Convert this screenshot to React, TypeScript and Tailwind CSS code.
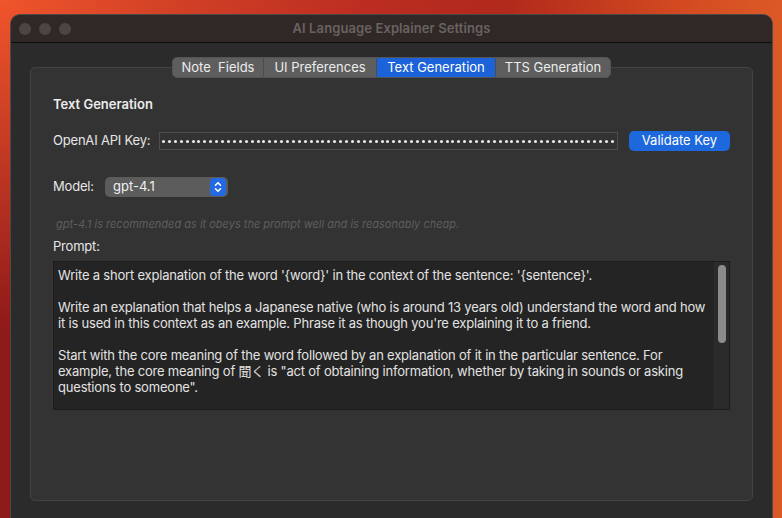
import React from "react";

const font = { fontFamily: "Inter, 'Noto Sans CJK JP', sans-serif" };

const tabs = [
  { label: "Note  Fields", w: "w-[90px]" },
  { label: "UI Preferences", w: "w-[113px]" },
  { label: "Text Generation", w: "w-[119px]", active: true },
  { label: "TTS Generation", w: "w-[115px]" },
];

const promptLines = [
  "Write a short explanation of the word '{word}' in the context of the sentence: '{sentence}'.",
  "",
  "Write an explanation that helps a Japanese native (who is around 13 years old) understand the word and how",
  "it is used in this context as an example. Phrase it as though you're explaining it to a friend.",
  "",
  "Start with the core meaning of the word followed by an explanation of it in the particular sentence. For",
  "example, the core meaning of 聞く is \"act of obtaining information, whether by taking in sounds or asking",
  "questions to someone\".",
];

function TrafficLights() {
  return (
    <div className="absolute left-[8px] top-[8px] flex gap-[8px]">
      <span className="w-[12px] h-[12px] rounded-full bg-[#4d4544]" />
      <span className="w-[12px] h-[12px] rounded-full bg-[#4d4544]" />
      <span className="w-[12px] h-[12px] rounded-full bg-[#4d4544]" />
    </div>
  );
}

function Stepper() {
  return (
    <div className="w-[16px] h-[18px] rounded-[4px] bg-[#2369e4] flex items-center justify-center">
      <svg width="10" height="14" viewBox="0 0 10 14" fill="none" stroke="white" strokeWidth="1.6" strokeLinecap="round" strokeLinejoin="round">
        <path d="M2.5 5.2 L5 2.7 L7.5 5.2" />
        <path d="M2.5 8.8 L5 11.3 L7.5 8.8" />
      </svg>
    </div>
  );
}

export default function App() {
  const dots = Array.from({ length: 77 });
  return (
    <div
      className="w-[782px] h-[518px] overflow-hidden flex flex-col pt-[14px] pl-[10px] pr-[9px] bg-[radial-gradient(ellipse_at_0%_0%,#f0552c_0%,transparent_45%),linear-gradient(90deg,#8e1919_0%,#a91e1e_45%,#b22a1c_65%,#d44b22_88%,#dc5a26_100%)]"
      style={font}
    >
      <div className="flex-1 flex flex-col rounded-t-[10px] border border-b-0 border-[#4e4846] bg-[#2b2b2b] overflow-hidden">
        {/* title bar */}
        <div className="relative h-[28px] bg-[#302827] border-b border-[#0e0e0e] flex items-center justify-center">
          <TrafficLights />
          <span className="text-[13px] font-semibold text-[#6a6260] tracking-[0.1px]">AI Language Explainer Settings</span>
        </div>

        {/* body */}
        <div className="px-[19px] pt-[24px]">
          <div className="relative h-[434px] rounded-[5px] border border-[#434343] bg-[#333333] px-[22px]">
            {/* segmented tabs */}
            <div className="absolute left-0 right-0 top-[-11px] flex justify-center">
              <div className="flex h-[21px] rounded-[5px] overflow-hidden bg-[#5e5e5e] border border-[#545454]">
                {tabs.map((t, i) => (
                  <div
                    key={t.label}
                    className={
                      "flex items-center justify-center text-[13px] whitespace-pre " +
                      t.w +
                      (t.active ? " bg-[#1c62d8] text-white" : " text-[#ececec]") +
                      (i > 0 ? " border-l border-[#4c4c4c]" : "")
                    }
                  >
                    {t.label}
                  </div>
                ))}
              </div>
            </div>

            <div className="pt-[28px] flex flex-col tracking-[-0.2px]">
              <div className="h-[16px] leading-[16px] text-[13px] font-semibold text-[#ececec] tracking-normal">Text Generation</div>

              {/* api key */}
              <div className="mt-[19px] flex items-center h-[20px]">
                <span className="text-[13px] text-[#e6e6e6] w-[106px]">OpenAI API Key:</span>
                <div className="flex-1 h-[18px] border border-[#4d4d4d] flex items-center justify-between pl-[2px] pr-[3px]">
                  {dots.map((_, i) => (
                    <span key={i} className="w-[3px] h-[3px] rounded-full bg-[#ececec]" />
                  ))}
                </div>
                <button className="ml-[11px] w-[101px] h-[20px] rounded-[5px] bg-[#1d68dc] text-white text-[13px] flex items-center justify-center tracking-normal">
                  Validate Key
                </button>
              </div>

              {/* model */}
              <div className="mt-[26px] flex items-center h-[20px]">
                <span className="text-[13px] text-[#e6e6e6] w-[52px]">Model:</span>
                <div className="w-[123px] h-[20px] rounded-[5px] bg-[#5c5c5c] flex items-center justify-between pl-[8px] pr-[2px]">
                  <span className="text-[13px] text-[#f0f0f0] tracking-normal">gpt-4.1</span>
                  <Stepper />
                </div>
              </div>

              <div className="mt-[20px] pl-[3px] h-[14px] leading-[14px] text-[11px] italic text-[#5e5e5e] tracking-normal">
                gpt-4.1 is recommended as it obeys the prompt well and is reasonably cheap.
              </div>

              <div className="mt-[7px] h-[16px] leading-[16px] text-[13px] text-[#e6e6e6]">Prompt:</div>

              {/* prompt textarea */}
              <div className="mt-[7px] h-[149px] flex border border-[#1c1c1c] bg-[#242424]">
                <div className="flex-1 pl-[4px] pt-[5px] text-[13px] leading-[16px] text-[#e2e2e2] whitespace-pre overflow-hidden">
                  {promptLines.map((l, i) => (
                    <div key={i} className="h-[16px]">
                      {l}
                    </div>
                  ))}
                </div>
                <div className="w-[15px] border-l border-[#2e2e2e] bg-[#2a2a2a] pt-[3px] flex justify-center">
                  <div className="w-[8px] h-[78px] rounded-full bg-[#8b8b8b]" />
                </div>
              </div>
            </div>
          </div>
        </div>
      </div>
    </div>
  );
}
